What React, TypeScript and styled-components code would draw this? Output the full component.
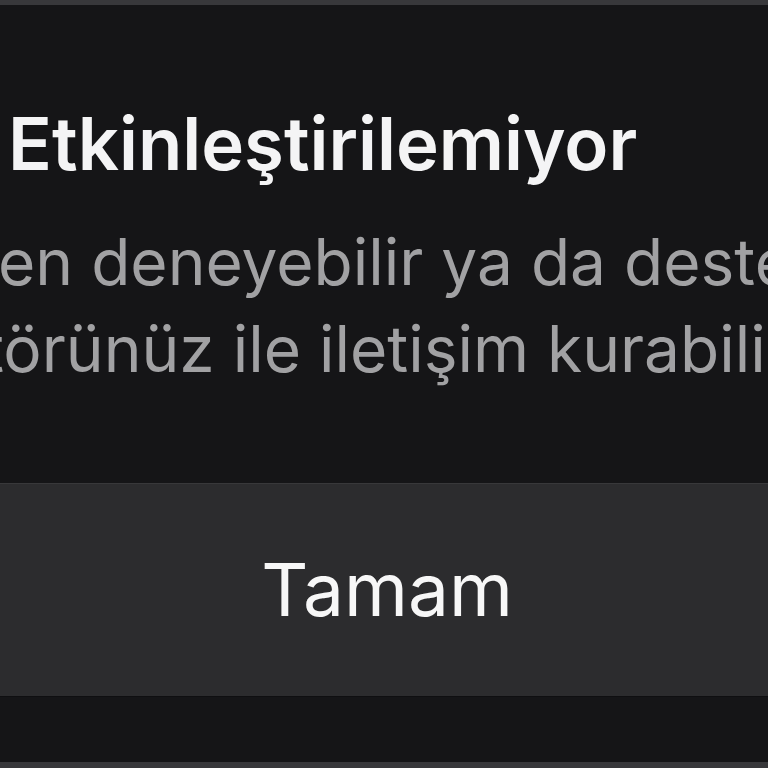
import React from 'react';
import styled, { createGlobalStyle } from 'styled-components';

const GlobalStyle = createGlobalStyle`
  html, body {
    margin: 0;
    padding: 0;
    background: #151517;
  }
  body {
    font-family: Inter, "Noto Sans", "Liberation Sans", sans-serif;
    -webkit-font-smoothing: antialiased;
  }
`;

const Screen = styled.div`
  width: 768px;
  height: 768px;
  overflow: hidden;
  background: #151517;
  display: flex;
  flex-direction: column;
`;

const Edge = styled.div<{ $bottom?: boolean }>`
  height: ${(p) => (p.$bottom ? '6px' : '5px')};
  flex-shrink: 0;
  background: #38383b;
  margin-top: ${(p) => (p.$bottom ? 'auto' : '0')};
`;

const Content = styled.div`
  padding-top: 95px;
  display: flex;
  flex-direction: column;
`;

const Title = styled.h1`
  margin: 0;
  padding-left: 8px;
  font-size: 72.5px;
  line-height: 88px;
  font-weight: 600;
  color: #f4f4f5;
  white-space: nowrap;
`;

const Message = styled.div`
  margin-top: 30px;
  display: flex;
  flex-direction: column;
  overflow: hidden;
`;

const MessageLine = styled.span<{ $shift: number }>`
  display: block;
  margin-left: ${(p) => p.$shift}px;
  font-size: 64px;
  line-height: 87px;
  font-weight: 400;
  color: #a1a1a3;
  white-space: nowrap;
`;

const ActionButton = styled.button`
  margin-top: 91px;
  width: 100%;
  height: 214px;
  border: none;
  border-top: 1px solid #38383a;
  border-bottom: 1px solid #0f0f11;
  background: #2c2c2e;
  color: #f7f7f7;
  font-family: inherit;
  font-size: 73px;
  font-weight: 400;
  line-height: 100px;
  display: flex;
  align-items: center;
  justify-content: center;
  padding: 0 0 0 6px;
  cursor: pointer;
`;

const App: React.FC = () => {
  return (
    <>
      <GlobalStyle />
      <Screen>
        <Edge />
        <Content>
          <Title>Etkinleştirilemiyor</Title>
          <Message>
            <MessageLine $shift={-2}>en deneyebilir ya da destek</MessageLine>
            <MessageLine $shift={-17}>törünüz ile iletişim kurabilirsiniz.</MessageLine>
          </Message>
        </Content>
        <ActionButton>Tamam</ActionButton>
        <Edge $bottom />
      </Screen>
    </>
  );
};

export default App;
